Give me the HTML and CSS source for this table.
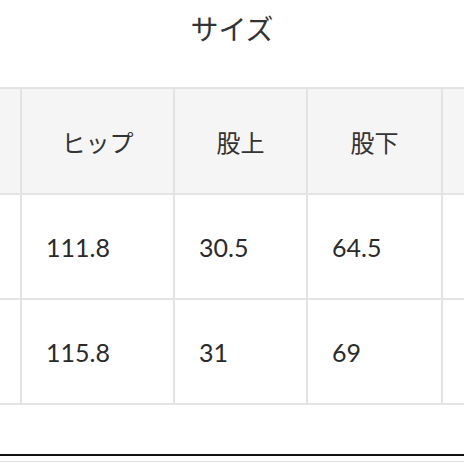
FILE: index.html
```html
<!DOCTYPE html>
<html lang="ja">
<head>
<meta charset="utf-8">
<link rel="stylesheet" href="styles.css">
</head>
<body>
<div class="page">
  <h1 class="title">サイズ</h1>
  <div class="table-wrap">
    <div class="grid">
      <div class="cell head"></div>
      <div class="cell head">ヒップ</div>
      <div class="cell head">股上</div>
      <div class="cell head">股下</div>
      <div class="cell head"></div>

      <div class="cell"></div>
      <div class="cell num">111.8</div>
      <div class="cell num">30.5</div>
      <div class="cell num">64.5</div>
      <div class="cell"></div>

      <div class="cell"></div>
      <div class="cell num">115.8</div>
      <div class="cell num">31</div>
      <div class="cell num">69</div>
      <div class="cell"></div>
    </div>
  </div>
  <div class="rule"></div>
  <div class="rule-light"></div>
</div>
</body>
</html>
```
FILE: styles.css
```css
html, body {
  margin: 0;
  padding: 0;
  background: #ffffff;
}
.page {
  width: 464px;
  height: 464px;
  overflow: hidden;
  font-family: "Lato", "Noto Sans CJK JP", sans-serif;
  color: #333333;
}
.title {
  margin: 8px 0 39px 0;
  height: 40px;
  line-height: 40px;
  font-size: 28px;
  font-weight: 400;
  text-align: center;
  font-family: "Noto Sans CJK JP", sans-serif;
  color: #333333;
}
.table-wrap {
  width: 464px;
  overflow: hidden;
}
.grid {
  display: grid;
  grid-template-columns: 130px 151px 131px 133px 140px;
  grid-template-rows: 104px 103px 103px;
  gap: 2px;
  padding: 2px 0;
  margin-left: -110px;
  width: max-content;
  background: #e3e3e3;
}
.cell {
  background: #ffffff;
  display: flex;
  align-items: center;
}
.cell.head {
  background: #f5f5f5;
  justify-content: center;
  font-family: "Noto Sans CJK JP", sans-serif;
  font-size: 24px;
  color: #333333;
}
.cell.num {
  padding-left: 24px;
  font-size: 25px;
  color: #2a2a2a;
}
.rule {
  margin-top: 49px;
  height: 2px;
  background: #111111;
}
.rule-light {
  margin-top: 5px;
  height: 1px;
  background: #dddddd;
}
```
